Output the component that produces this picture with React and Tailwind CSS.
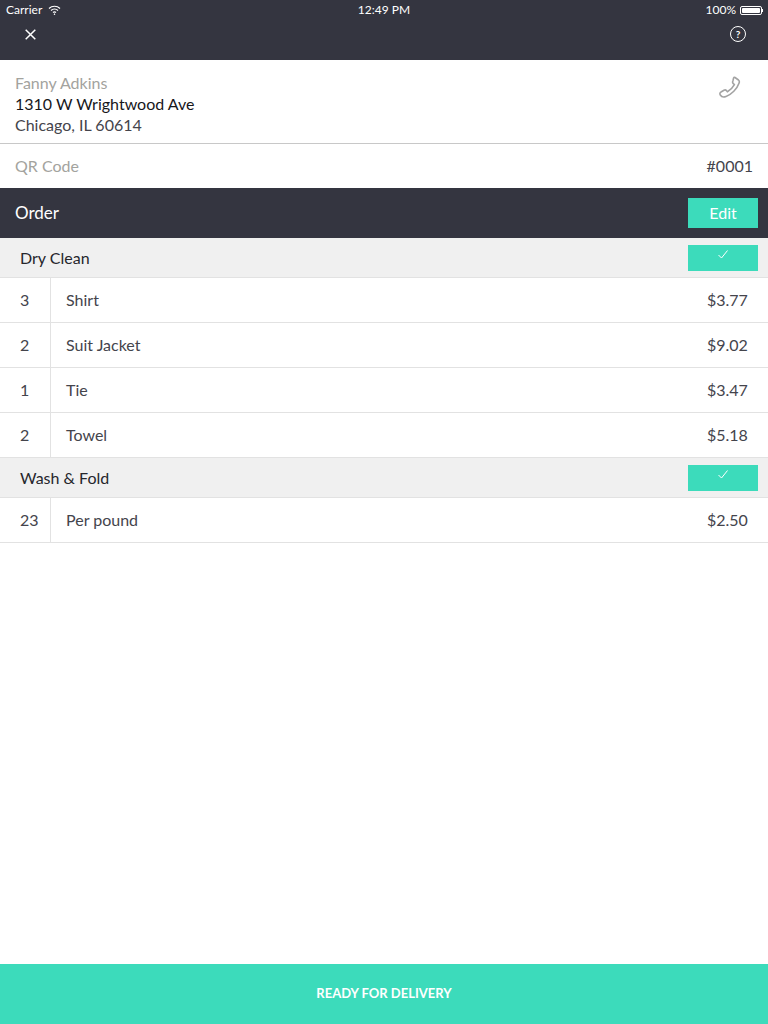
const DRY_CLEAN = [
  { qty: 3, name: 'Shirt', price: '$3.77' },
  { qty: 2, name: 'Suit Jacket', price: '$9.02' },
  { qty: 1, name: 'Tie', price: '$3.47' },
  { qty: 2, name: 'Towel', price: '$5.18' },
];

const WASH_FOLD = [{ qty: 23, name: 'Per pound', price: '$2.50' }];

function Check() {
  return (
    <svg width="10" height="9" viewBox="0 0 10 9" fill="none" stroke="white" strokeWidth="1">
      <path d="M0.5 5 L3.5 8 L9.5 0.5" />
    </svg>
  );
}

function Category({ title }) {
  return (
    <div className="h-10 bg-[#f0f0f0] border-b border-[#e2e2e2] flex items-center justify-between pl-5 pr-2.5 box-content-none">
      <span className="text-[16px] text-[#26262c]">{title}</span>
      <div className="w-[70px] h-[26px] bg-[#3cdbbb] flex items-center justify-center pb-1.5">
        <Check />
      </div>
    </div>
  );
}

function Row({ qty, name, price }) {
  return (
    <div className="h-[45px] border-b border-[#e2e2e2] last:border-b-0 flex text-[16px] text-[#44444c]">
      <div className="w-[51px] pl-5 border-r border-[#e2e2e2] flex items-center">{qty}</div>
      <div className="flex-1 pl-[15px] flex items-center">{name}</div>
      <div className="w-[61px] flex items-center">{price}</div>
    </div>
  );
}

export default function App() {
  return (
    <div className="w-[768px] h-[1024px] bg-white flex flex-col font-['Lato','Liberation_Sans',sans-serif]">
      <div className="h-[60px] bg-[#343540] text-white">
        <div className="h-5 flex items-center justify-between pl-1.5 pr-[5px] text-[12px] relative">
          <div className="flex items-center gap-1.5">
            <span>Carrier</span>
            <svg width="13" height="10" viewBox="0 0 13 10" fill="none" stroke="white" strokeWidth="1.2">
              <path d="M1 3.5 C4 0.5 9 0.5 12 3.5" />
              <path d="M3 5.5 C5 3.7 8 3.7 10 5.5" />
              <path d="M5 7.5 C5.8 6.8 7.2 6.8 8 7.5" />
              <path d="M6 8.8 L6.5 9.3 L7 8.8" />
            </svg>
          </div>
          <span className="absolute left-0 right-0 text-center">12:49 PM</span>
          <div className="flex items-center gap-1">
            <span>100%</span>
            <div className="flex items-center">
              <div className="w-[22px] h-[9px] border border-white rounded-[2px] p-px">
                <div className="w-full h-full bg-white rounded-[1px]" />
              </div>
              <div className="w-px h-[3px] bg-white" />
            </div>
          </div>
        </div>
        <div className="h-7 flex items-center justify-between pl-[25px] pr-[22px]">
          <svg width="11" height="11" viewBox="0 0 11 11" fill="none" stroke="white" strokeWidth="1.5">
            <path d="M0.7 0.7 L10.3 10.3 M10.3 0.7 L0.7 10.3" />
          </svg>
          <div className="w-4 h-4 rounded-full border-[1.5px] border-white flex items-center justify-center text-[10px] font-bold leading-none">?</div>
        </div>
      </div>

      <div className="h-[84px] border-b border-[#c8c8c8] flex justify-between pl-[15px] pr-[26px] pt-3 text-[16px] leading-[21px]">
        <div>
          <div className="text-[#a3a39e]">Fanny Adkins</div>
          <div className="text-[#17171b]">1310 W Wrightwood Ave</div>
          <div className="text-[#44444c]">Chicago, IL 60614</div>
        </div>
        <svg className="mt-[3px]" width="24" height="24" viewBox="0 0 24 24" fill="none" stroke="#a3a3a3" strokeWidth="1.6" strokeLinejoin="round">
          <path d="M17 2.5 L20.5 5 C21.5 5.8 21.5 7 21 8.3 C19 14 13.5 19.5 8 21.5 C6 22.3 3.5 22 2.3 20 C1.5 18.7 2 17.5 3 17 L6 15.2 C7 14.6 8 15 8.6 15.8 L9.4 16.8 C12 15.3 14.8 12.5 16.4 9.6 L15.3 8.6 C14.5 7.9 14.4 7 14.9 6 L15.6 3 C15.9 2.3 16.4 2.1 17 2.5 Z" />
        </svg>
      </div>

      <div className="h-11 flex items-center justify-between pl-[15px] pr-[15px] text-[16px]">
        <span className="text-[#a3a39e]">QR Code</span>
        <span className="text-[#44444c]">#0001</span>
      </div>

      <div className="h-[50px] bg-[#343540] flex items-center justify-between pl-[15px] pr-2.5">
        <span className="text-[17px] text-white">Order</span>
        <div className="w-[70px] h-[30px] bg-[#3cdbbb] flex items-center justify-center text-[16px] text-white">Edit</div>
      </div>

      <Category title="Dry Clean" />
      {DRY_CLEAN.map((r) => <Row key={r.name} {...r} />)}
      <Category title="Wash & Fold" />
      {WASH_FOLD.map((r) => <Row key={r.name} {...r} />)}

      <div className="mt-auto h-[60px] bg-[#3cdbbb] flex items-center justify-center text-[13px] font-bold text-white">
        READY FOR DELIVERY
      </div>
    </div>
  );
}
